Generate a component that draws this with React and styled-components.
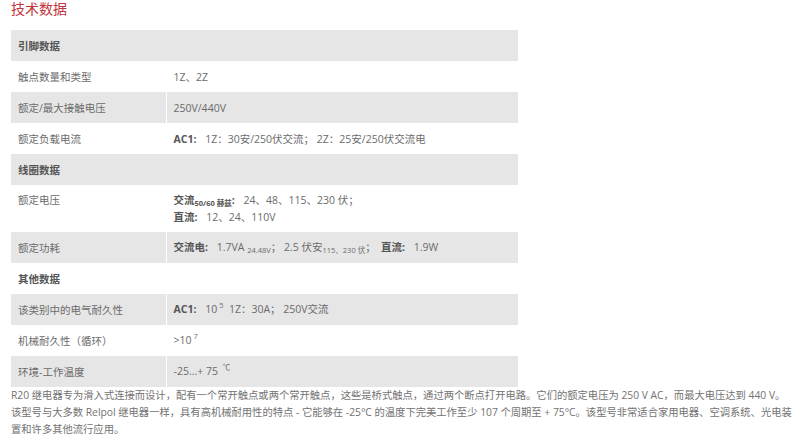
import React from "react";
import styled, { createGlobalStyle } from "styled-components";

const GlobalStyle = createGlobalStyle`
  body {
    margin: 0;
    background: #fff;
    font-family: "Open Sans", "Noto Sans CJK SC", sans-serif;
  }
`;

const Page = styled.div`
  padding: 0 10px 0 11px;
  width: 800px;
  box-sizing: border-box;
`;

const Title = styled.h2`
  margin: 0;
  height: 30px;
  font-size: 14px;
  line-height: 17px;
  font-weight: 400;
  color: #c1343c;
  font-family: "Noto Sans CJK SC", sans-serif;
`;

const Table = styled.table`
  width: 507px;
  border-collapse: collapse;
  table-layout: fixed;
  font-size: 10.5px;
  color: #6b6b6b;
`;

const Row = styled.tr`
  background: ${(p) => (p.$shade ? "#e6e6e6" : "#fff")};
`;

const Cell = styled.td`
  height: ${(p) => (p.$tall ? "47px" : "31px")};
  padding: ${(p) => (p.$tall ? "7px 7px 0" : "0 7px")};
  vertical-align: ${(p) => (p.$tall ? "top" : "middle")};
  box-sizing: border-box;
  border-left: ${(p) => (p.$value ? "1px solid #fff" : "none")};
  line-height: 16px;
  white-space: nowrap;
`;

const HeadCell = styled.td`
  height: 31px;
  padding: 0 7px;
  box-sizing: border-box;
  font-weight: 700;
  color: #555;
`;

const B = styled.b`
  font-weight: 700;
  color: #555;
  margin-right: 6px;
`;

const Sub = styled.sub`
  font-size: 7.5px;
  vertical-align: baseline;
  position: relative;
  top: 2px;
`;

const Sup = styled.sup`
  font-size: 7.5px;
  vertical-align: baseline;
  position: relative;
  top: -5px;
  margin-left: 2px;
`;

const Para = styled.p`
  margin: 0;
  font-size: 10.3px;
  line-height: 17px;
  color: #727272;
  white-space: nowrap;
`;

const Section = ({ title, shade }) => (
  <Row $shade={shade}>
    <HeadCell colSpan={2}>{title}</HeadCell>
  </Row>
);

const Item = ({ label, shade, tall, children }) => (
  <Row $shade={shade}>
    <Cell $tall={tall}>{label}</Cell>
    <Cell $tall={tall} $value>
      {children}
    </Cell>
  </Row>
);

export default function App() {
  return (
    <Page>
      <GlobalStyle />
      <Title>技术数据</Title>
      <Table>
        <colgroup>
          <col style={{ width: "155px" }} />
          <col />
        </colgroup>
        <tbody>
          <Section title="引脚数据" shade />
          <Item label="触点数量和类型">1Z、2Z</Item>
          <Item label="额定/最大接触电压" shade>
            250V/440V
          </Item>
          <Item label="额定负载电流">
            <B>AC1:</B> 1Z：30安/250伏交流； 2Z：25安/250伏交流电
          </Item>
          <Section title="线圈数据" shade />
          <Item label="额定电压" tall>
            <B>
              交流<Sub>50/60 赫兹</Sub>:
            </B>{" "}
            24、48、115、230 伏；
            <br />
            <B>直流:</B> 12、24、110V
          </Item>
          <Item label="额定功耗" shade>
            <B>交流电:</B> 1.7VA <Sub>24.48V</Sub>； 2.5 伏安<Sub>115、230 伏</Sub>；{" "}
            <B>&nbsp;直流:</B> 1.9W
          </Item>
          <Section title="其他数据" />
          <Item label="该类别中的电气耐久性" shade>
            <B>AC1:</B> 10<Sup>5</Sup>&nbsp; 1Z：30A； 250V交流
          </Item>
          <Item label="机械耐久性（循环）">
            &gt;10<Sup>7</Sup>
          </Item>
          <Item label="环境-工作温度" shade>
            -25...+ 75 <Sup>℃</Sup>
          </Item>
        </tbody>
      </Table>
      <Para>
        R20 继电器专为滑入式连接而设计，配有一个常开触点或两个常开触点，这些是桥式触点，通过两个断点打开电路。它们的额定电压为 250 V AC，而最大电压达到 440 V。
      </Para>
      <Para>
        该型号与大多数 Relpol 继电器一样，具有高机械耐用性的特点 - 它能够在 -25°C 的温度下完美工作至少 107 个周期至 + 75°C。该型号非常适合家用电器、空调系统、光电装
      </Para>
      <Para>置和许多其他流行应用。</Para>
    </Page>
  );
}
